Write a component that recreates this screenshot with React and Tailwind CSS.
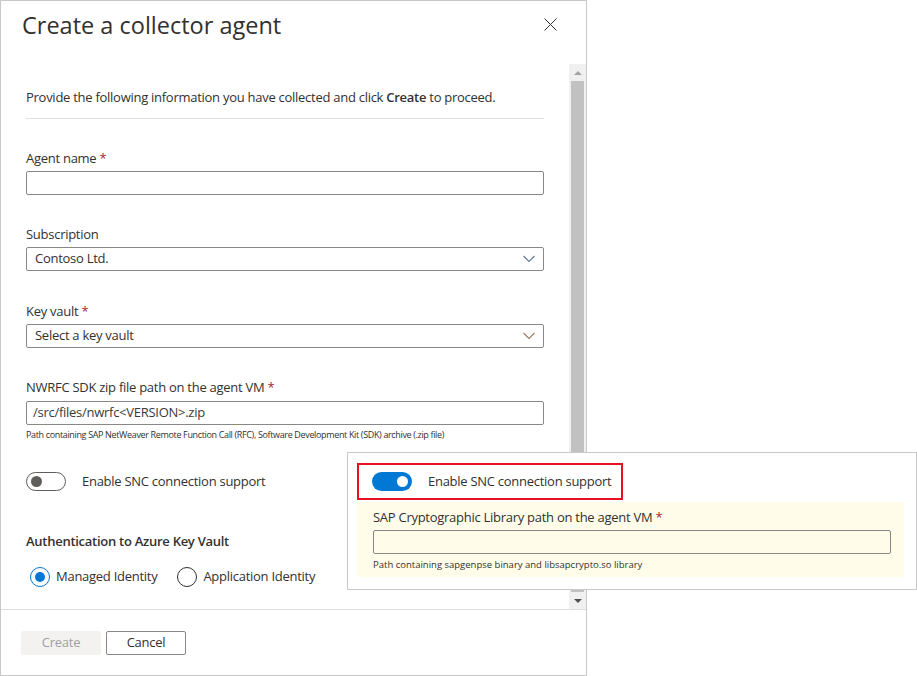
const FONT = { fontFamily: '"Open Sans", "Noto Sans", sans-serif' };

function Label({ children, required }) {
  return (
    <div className="h-[18px] text-[13px] leading-[18px] text-[#323130]">
      {children}
      {required && <span className="text-[#a4262c]"> *</span>}
    </div>
  );
}

function Chevron({ color }) {
  return (
    <svg width="12" height="8" viewBox="0 0 12 8" fill="none">
      <path d="M0.5 1L6 6.5L11.5 1" stroke={color} strokeWidth="1.1" />
    </svg>
  );
}

function Select({ value, chevron }) {
  return (
    <div className="mt-[4px] flex h-[24px] items-center justify-between rounded-[2px] border border-[#8a8886] pl-[8px] pr-[8px] text-[13px] text-[#323130]">
      <span>{value}</span>
      <Chevron color={chevron} />
    </div>
  );
}

function Toggle({ on }) {
  if (on) {
    return (
      <div className="flex h-[19px] w-[40px] items-center justify-end rounded-full bg-[#0078d4] pr-[4px]">
        <div className="h-[11px] w-[11px] rounded-full bg-white" />
      </div>
    );
  }
  return (
    <div className="flex h-[19px] w-[40px] items-center rounded-full border border-[#605e5c] pl-[4px]">
      <div className="h-[11px] w-[11px] rounded-full bg-[#605e5c]" />
    </div>
  );
}

function Radio({ checked, label }) {
  return (
    <div className="flex items-center gap-[6px]">
      <div
        className={
          checked
            ? "flex h-[20px] w-[20px] items-center justify-center rounded-full border border-[#0078d4]"
            : "h-[20px] w-[20px] rounded-full border border-[#323130]"
        }
      >
        {checked && <div className="h-[10px] w-[10px] rounded-full bg-[#0078d4]" />}
      </div>
      <span className="text-[13px] text-[#323130]">{label}</span>
    </div>
  );
}

export default function App() {
  return (
    <div className="relative h-[676px] w-[917px] overflow-hidden bg-white tracking-[-0.27px]" style={FONT}>
      <div className="flex h-[676px] w-[587px] flex-col border border-[#c8c8c8]">
        {/* header */}
        <div className="flex h-[63px] shrink-0 items-start justify-between pl-[21px] pr-[29px] pt-[7px]">
          <h1 className="text-[23.5px] leading-[34px] tracking-normal text-[#323130]">Create a collector agent</h1>
          <svg className="mt-[10px]" width="13" height="13" viewBox="0 0 13 13">
            <path d="M0.5 0.5L12.5 12.5M12.5 0.5L0.5 12.5" stroke="#323130" strokeWidth="1" />
          </svg>
        </div>

        {/* body */}
        <div className="flex min-h-0 flex-1">
          <div className="flex-1 px-[25px] pt-[24px]">
            <p className="text-[13px] leading-[18px] text-[#323130]">
              Provide the following information you have collected and click <b className="font-semibold">Create</b> to proceed.
            </p>
            <div className="mt-[12px] h-px bg-[#e1dfdd]" />

            <div className="mt-[30px]">
              <Label required>Agent name</Label>
              <div className="mt-[4px] h-[24px] rounded-[2px] border border-[#8a8886]" />
            </div>

            <div className="mt-[30px]">
              <Label>Subscription</Label>
              <Select value="Contoso Ltd." chevron="#5f7896" />
            </div>

            <div className="mt-[31px]">
              <Label required>Key vault</Label>
              <Select value="Select a key vault" chevron="#9a7a5e" />
            </div>

            <div className="mt-[30px]">
              <Label required>NWRFC SDK zip file path on the agent VM</Label>
              <div className="mt-[5px] flex h-[24px] items-center rounded-[2px] border border-[#8a8886] pl-[6px] text-[13px] text-[#3b3a39]">
                /src/files/nwrfc&lt;VERSION&gt;.zip
              </div>
              <div className="mt-[3px] text-[9px] leading-[14px] tracking-[-0.35px] text-[#323130]">
                Path containing SAP NetWeaver Remote Function Call (RFC), Software Development Kit (SDK) archive (.zip file)
              </div>
            </div>

            <div className="mt-[30px] flex items-center gap-[16px]">
              <Toggle />
              <span className="text-[13px] text-[#323130]">Enable SNC connection support</span>
            </div>

            <div className="mt-[40px] text-[13px] font-semibold leading-[18px] text-[#323130]">
              Authentication to Azure Key Vault
            </div>
            <div className="mt-[17px] flex items-center gap-[20px] pl-[4px]">
              <Radio checked label="Managed Identity" />
              <Radio label="Application Identity" />
            </div>
          </div>

          {/* scrollbar */}
          <div className="flex w-[17px] flex-col bg-[#f0f0f0]">
            <div className="flex h-[17px] items-center justify-center">
              <div className="h-0 w-0 border-x-[4px] border-b-[4px] border-x-transparent border-b-[#a3a3a3]" />
            </div>
            <div className="mx-[2px] flex-1 bg-[#c1c1c1]" />
            <div className="flex h-[17px] items-center justify-center">
              <div className="h-0 w-0 border-x-[4px] border-t-[4px] border-x-transparent border-t-[#505050]" />
            </div>
          </div>
        </div>

        {/* footer */}
        <div className="flex h-[66px] shrink-0 items-start gap-[5px] border-t border-[#e1dfdd] pl-[20px] pt-[21px]">
          <div className="flex h-[24px] w-[80px] items-center justify-center rounded-[2px] bg-[#f3f2f1] text-[13px] text-[#a19f9d]">
            Create
          </div>
          <div className="flex h-[24px] w-[80px] items-center justify-center rounded-[2px] border border-[#8a8886] text-[13px] text-[#323130]">
            Cancel
          </div>
        </div>
      </div>

      {/* zoomed-in callout */}
      <div className="absolute left-[347px] top-[452px] h-[138px] w-[570px] border border-[#c8c8c8] bg-white pl-[9px] pr-[12px] pt-[10px]">
        <div className="flex h-[37px] w-[266px] items-center gap-[16px] border-2 border-[#e81123] pl-[13px]">
          <Toggle on />
          <span className="text-[13px] text-[#323130]">Enable SNC connection support</span>
        </div>
        <div className="mt-[2px] h-[75px] bg-[#fffde9] pl-[16px] pr-[13px] pt-[6px]">
          <Label required>SAP Cryptographic Library path on the agent VM</Label>
          <div className="mt-[4px] h-[24px] rounded-[2px] border border-[#8a8886]" />
          <div className="mt-[4px] text-[9.5px] leading-[14px] tracking-normal text-[#323130]">
            Path containing sapgenpse binary and libsapcrypto.so library
          </div>
        </div>
      </div>
    </div>
  );
}
